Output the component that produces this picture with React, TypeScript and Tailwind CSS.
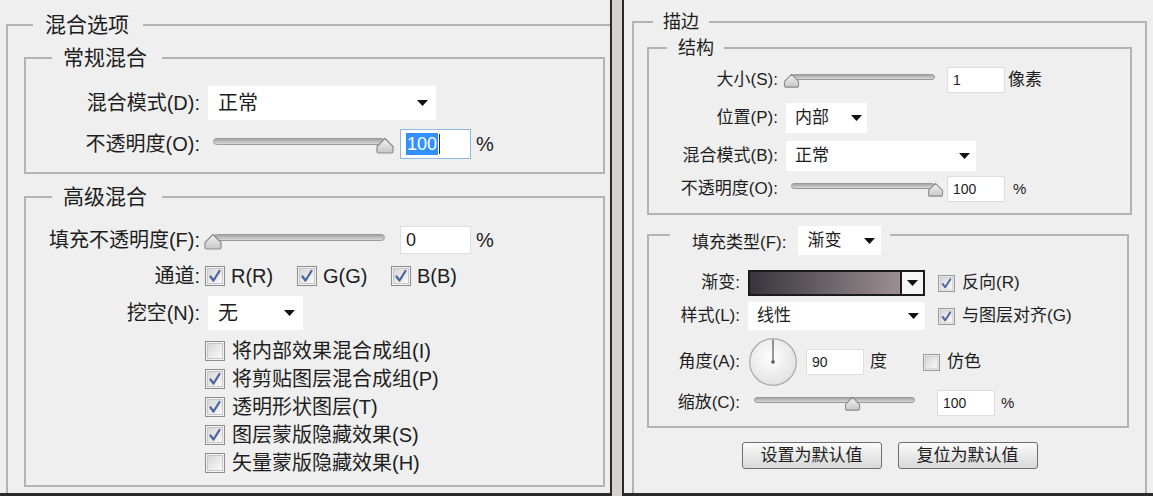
import React from "react";

// small drop-down arrow used in the select boxes
function Arrow({ w = 11, h = 6 }: { w?: number; h?: number }) {
  return (
    <svg width={w} height={h} viewBox="0 0 11 6" className="shrink-0">
      <polygon points="0,0 11,0 5.5,6" fill="#111" />
    </svg>
  );
}

function Select({ className, text }: { className: string; text: string }) {
  return (
    <div className={`flex items-center justify-between bg-white ${className}`}>
      <span>{text}</span>
      <Arrow />
    </div>
  );
}

function Thumb({ left, small }: { left: string; small?: boolean }) {
  return (
    <svg
      className={small ? "absolute top-[2px]" : "absolute top-[3px]"}
      style={{ left }}
      width={small ? 17 : 18}
      height={small ? 15 : 17}
      viewBox="0 0 18 17"
    >
      <defs>
        <linearGradient id="thumbFill" x1="0" y1="0" x2="0" y2="1">
          <stop offset="0" stopColor="#f4f4f4" />
          <stop offset="1" stopColor="#c6c6c6" />
        </linearGradient>
      </defs>
      <path
        d="M2.5 16 Q1 16 1 14.5 V9.5 L9 1.5 L17 9.5 V14.5 Q17 16 15.5 16 Z"
        fill="url(#thumbFill)"
        stroke="#8b8b8b"
        strokeWidth="1.2"
        strokeLinejoin="round"
      />
    </svg>
  );
}

function Slider({ className, pct, small }: { className: string; pct: number; small?: boolean }) {
  const half = small ? 8.5 : 9;
  return (
    <div className={`relative shrink-0 ${className}`}>
      <div
        className={
          small
            ? "absolute left-[8px] right-[8px] top-[3px] h-[6px] rounded-full border border-[#9a9a9a] bg-gradient-to-b from-[#a3a3a3] to-[#d9d9d9]"
            : "absolute left-[8px] right-[8px] top-[4px] h-[7px] rounded-full border border-[#9a9a9a] bg-gradient-to-b from-[#a3a3a3] to-[#d9d9d9]"
        }
      />
      <Thumb small={small} left={`calc(8px + ${pct} * (100% - 16px) - ${half}px)`} />
    </div>
  );
}

function Check({ on, size }: { on?: boolean; size: number }) {
  return (
    <svg width={size} height={size} viewBox="0 0 20 20" className="shrink-0">
      <defs>
        <linearGradient id="boxFill" x1="0" y1="0" x2="1" y2="1">
          <stop offset="0" stopColor="#d6d6d6" />
          <stop offset="1" stopColor="#fbfbfb" />
        </linearGradient>
      </defs>
      <rect x="0.5" y="0.5" width="19" height="19" fill="#f3f3f3" stroke="#8c8c8c" />
      <rect x="2.5" y="2.5" width="15" height="15" fill="url(#boxFill)" stroke="#c6c6c6" />
      {on && (
        <path
          d="M5.5 10.5 L8.5 14.5 L14.5 5"
          fill="none"
          stroke="#4b67a0"
          strokeWidth="2.3"
          strokeLinecap="round"
          strokeLinejoin="round"
        />
      )}
    </svg>
  );
}

function Dial() {
  return (
    <svg width="48" height="48" viewBox="0 0 48 48" className="ml-[9px] shrink-0">
      <defs>
        <radialGradient id="dialFill" cx="0.45" cy="0.4" r="0.6">
          <stop offset="0" stopColor="#ffffff" />
          <stop offset="1" stopColor="#e2e2e2" />
        </radialGradient>
      </defs>
      <circle cx="24" cy="24" r="23.3" fill="url(#dialFill)" stroke="#a8a8a8" strokeWidth="1.2" />
      <line x1="24" y1="1.5" x2="24" y2="24" stroke="#555" strokeWidth="1.2" />
      <circle cx="24" cy="24" r="1.8" fill="#555" />
    </svg>
  );
}

export default function App() {
  return (
    <div className="flex h-[496px] w-[1153px] overflow-hidden bg-[#d4d4cc] font-['Liberation_Sans','Noto_Sans_CJK_SC',sans-serif] text-[#1d1d1d]">
      {/* 左侧: 混合选项 */}
      <div className="h-full w-[612px] shrink-0 border-r-2 border-b-[3px] border-[#2a2a2a] bg-[#efefef] pl-[6px] pt-[13px]">
        <fieldset className="h-full border-2 border-r-0 border-b-0 border-[#b3b3b3]">
          <legend className="ml-[25px] pl-[12px] pr-[14px] text-[21px] leading-[24px]">混合选项</legend>

          <fieldset className="ml-[16px] mr-[5px] mt-[9px] border-2 border-[#b3b3b3] pb-[13px]">
            <legend className="ml-[26px] pl-[11px] pr-[15px] text-[21px] leading-[24px]">常规混合</legend>
            <div className="mt-[16px] flex h-[34px] items-center">
              <div className="w-[174px] text-right text-[20px] leading-[24px]">混合模式(D):</div>
              <Select className="ml-[8px] h-[34px] w-[228px] pl-[10px] pr-[8px] text-[20px]" text="正常" />
            </div>
            <div className="mt-[9px] flex h-[30px] items-center">
              <div className="w-[174px] text-right text-[20px] leading-[24px]">不透明度(O):</div>
              <Slider className="ml-[5px] h-[20px] w-[188px]" pct={1} />
              <div className="ml-[7px] flex h-[30px] w-[71px] items-center border border-[#8fb8e4] bg-white pl-[5px] text-[18px]">
                <span className="bg-[#3391ff] px-[1px] leading-[22px] text-white">100</span>
                <span className="ml-[1px] h-[20px] w-[1px] bg-[#333]" />
              </div>
              <span className="ml-[5px] text-[20px]">%</span>
            </div>
          </fieldset>

          <fieldset className="ml-[16px] mr-[5px] mt-[11px] border-2 border-[#b3b3b3] pb-[8px]">
            <legend className="ml-[26px] pl-[11px] pr-[15px] text-[21px] leading-[24px]">高级混合</legend>
            <div className="mt-[17px] flex h-[28px] items-center">
              <div className="w-[174px] text-right text-[20px] leading-[24px]">填充不透明度(F):</div>
              <Slider className="ml-[5px] h-[20px] w-[188px]" pct={0} />
              <div className="ml-[7px] flex h-[28px] w-[71px] items-center border border-[#dedede] bg-white pl-[5px] text-[18px]">0</div>
              <span className="ml-[5px] text-[20px]">%</span>
            </div>
            <div className="mt-[10px] flex h-[24px] items-center text-[20px] leading-[24px]">
              <div className="w-[174px] text-right">通道:</div>
              <div className="ml-[5px] flex w-[92px] items-center gap-[6px]">
                <Check on size={20} />
                <span>R(R)</span>
              </div>
              <div className="flex w-[94px] items-center gap-[6px]">
                <Check on size={20} />
                <span>G(G)</span>
              </div>
              <div className="flex items-center gap-[6px]">
                <Check on size={20} />
                <span>B(B)</span>
              </div>
            </div>
            <div className="mt-[8px] flex h-[34px] items-center">
              <div className="w-[174px] text-right text-[20px] leading-[24px]">挖空(N):</div>
              <Select className="ml-[8px] h-[34px] w-[95px] pl-[10px] pr-[8px] text-[20px]" text="无" />
            </div>
            <div className="mt-[7px] pl-[179px] text-[20px] leading-[24px]">
              {[
                ["将内部效果混合成组(I)", false],
                ["将剪贴图层混合成组(P)", true],
                ["透明形状图层(T)", true],
                ["图层蒙版隐藏效果(S)", true],
                ["矢量蒙版隐藏效果(H)", false],
              ].map(([label, on]) => (
                <div key={label as string} className="flex h-[28px] items-center gap-[7px]">
                  <Check on={on as boolean} size={20} />
                  <span>{label}</span>
                </div>
              ))}
            </div>
          </fieldset>
        </fieldset>
      </div>

      <div className="w-[10px] shrink-0" />

      {/* 右侧: 描边 */}
      <div className="h-full flex-1 border-l-2 border-b-[3px] border-[#2a2a2a] bg-[#efefef] pl-[8px] pr-[6px] pt-[11px]">
        <fieldset className="h-full border-2 border-b-0 border-[#b3b3b3]">
          <legend className="ml-[19px] pl-[10px] pr-[10px] text-[18px] leading-[22px]">描边</legend>

          <fieldset className="ml-[13px] mr-[13px] mt-[4px] border-2 border-[#b3b3b3] pb-[11px]">
            <legend className="ml-[18px] pl-[11px] pr-[10px] text-[18px] leading-[22px]">结构</legend>
            <div className="mt-[8px] flex h-[26px] items-center text-[17px]">
              <div className="w-[129px] text-right leading-[20px]">大小(S):</div>
              <Slider small className="ml-[5px] h-[18px] w-[160px]" pct={0} />
              <div className="ml-[4px] flex h-[26px] w-[58px] items-center border border-[#dedede] bg-white pl-[5px] text-[14px]">1</div>
              <span className="ml-[3px]">像素</span>
            </div>
            <div className="mt-[10px] flex h-[30px] items-center text-[17px]">
              <div className="w-[129px] text-right leading-[20px]">位置(P):</div>
              <Select className="ml-[8px] h-[30px] w-[81px] pl-[9px] pr-[5px]" text="内部" />
            </div>
            <div className="mt-[8px] flex h-[30px] items-center text-[17px]">
              <div className="w-[129px] text-right leading-[20px]">混合模式(B):</div>
              <Select className="ml-[8px] h-[30px] w-[190px] pl-[9px] pr-[6px]" text="正常" />
            </div>
            <div className="mt-[5px] flex h-[26px] items-center text-[17px]">
              <div className="w-[129px] text-right leading-[20px]">不透明度(O):</div>
              <Slider small className="ml-[5px] h-[18px] w-[160px]" pct={1} />
              <div className="ml-[4px] flex h-[26px] w-[58px] items-center border border-[#dedede] bg-white pl-[5px] text-[14px]">100</div>
              <span className="ml-[8px] text-[15px]">%</span>
            </div>
          </fieldset>

          <fieldset className="ml-[13px] mr-[16px] mt-[9px] border-2 border-[#b3b3b3] pb-[10px]">
            <legend className="ml-[21px] pl-[22px] pr-[9px]">
              <div className="flex h-[22px] items-start text-[17px]">
                <span className="mt-[9px] leading-[20px]">填充类型(F):</span>
                <Select className="ml-[12px] mt-[2px] h-[29px] w-[83px] pl-[9px] pr-[6px]" text="渐变" />
              </div>
            </legend>
            <div className="mt-[24px] flex h-[26px] items-center text-[17px]">
              <div className="w-[91px] text-right leading-[20px]">渐变:</div>
              <div className="ml-[8px] flex h-[26px] w-[177px] border-2 border-[#1b1b1b]">
                <div className="flex-1 bg-[linear-gradient(to_right,#37353b,#9b8f92)]" />
                <div className="flex w-[23px] items-center justify-center border-l-2 border-[#1b1b1b] bg-[#f5f5f5]">
                  <Arrow />
                </div>
              </div>
              <div className="ml-[13px] flex items-center gap-[7px]">
                <Check on size={17} />
                <span>反向(R)</span>
              </div>
            </div>
            <div className="mt-[6px] flex h-[28px] items-center text-[17px]">
              <div className="w-[91px] text-right leading-[20px]">样式(L):</div>
              <Select className="ml-[8px] h-[28px] w-[177px] pl-[9px] pr-[6px]" text="线性" />
              <div className="ml-[13px] flex items-center gap-[7px]">
                <Check on size={17} />
                <span>与图层对齐(G)</span>
              </div>
            </div>
            <div className="mt-[8px] flex h-[48px] items-center text-[17px]">
              <div className="w-[91px] text-right leading-[20px]">角度(A):</div>
              <Dial />
              <div className="ml-[9px] flex h-[26px] w-[58px] items-center border border-[#dedede] bg-white pl-[5px] text-[14px]">90</div>
              <span className="ml-[6px]">度</span>
              <div className="ml-[36px] flex items-center gap-[7px]">
                <Check size={17} />
                <span>仿色</span>
              </div>
            </div>
            <div className="mt-[4px] flex h-[26px] items-center text-[17px]">
              <div className="w-[91px] text-right leading-[20px]">缩放(C):</div>
              <Slider small className="ml-[6px] h-[18px] w-[177px]" pct={0.61} />
              <div className="ml-[14px] flex h-[26px] w-[58px] items-center border border-[#dedede] bg-white pl-[5px] text-[14px]">100</div>
              <span className="ml-[6px] text-[15px]">%</span>
            </div>
          </fieldset>

          <div className="mt-[14px] flex justify-center gap-[16px] text-[17px]">
            <button className="h-[27px] w-[140px] rounded-[3px] border border-[#6e6e6e] bg-gradient-to-b from-[#fbfbfb] to-[#d8d8d8] leading-[20px]">
              设置为默认值
            </button>
            <button className="h-[27px] w-[140px] rounded-[3px] border border-[#6e6e6e] bg-gradient-to-b from-[#fbfbfb] to-[#d8d8d8] leading-[20px]">
              复位为默认值
            </button>
          </div>
        </fieldset>
      </div>
    </div>
  );
}
